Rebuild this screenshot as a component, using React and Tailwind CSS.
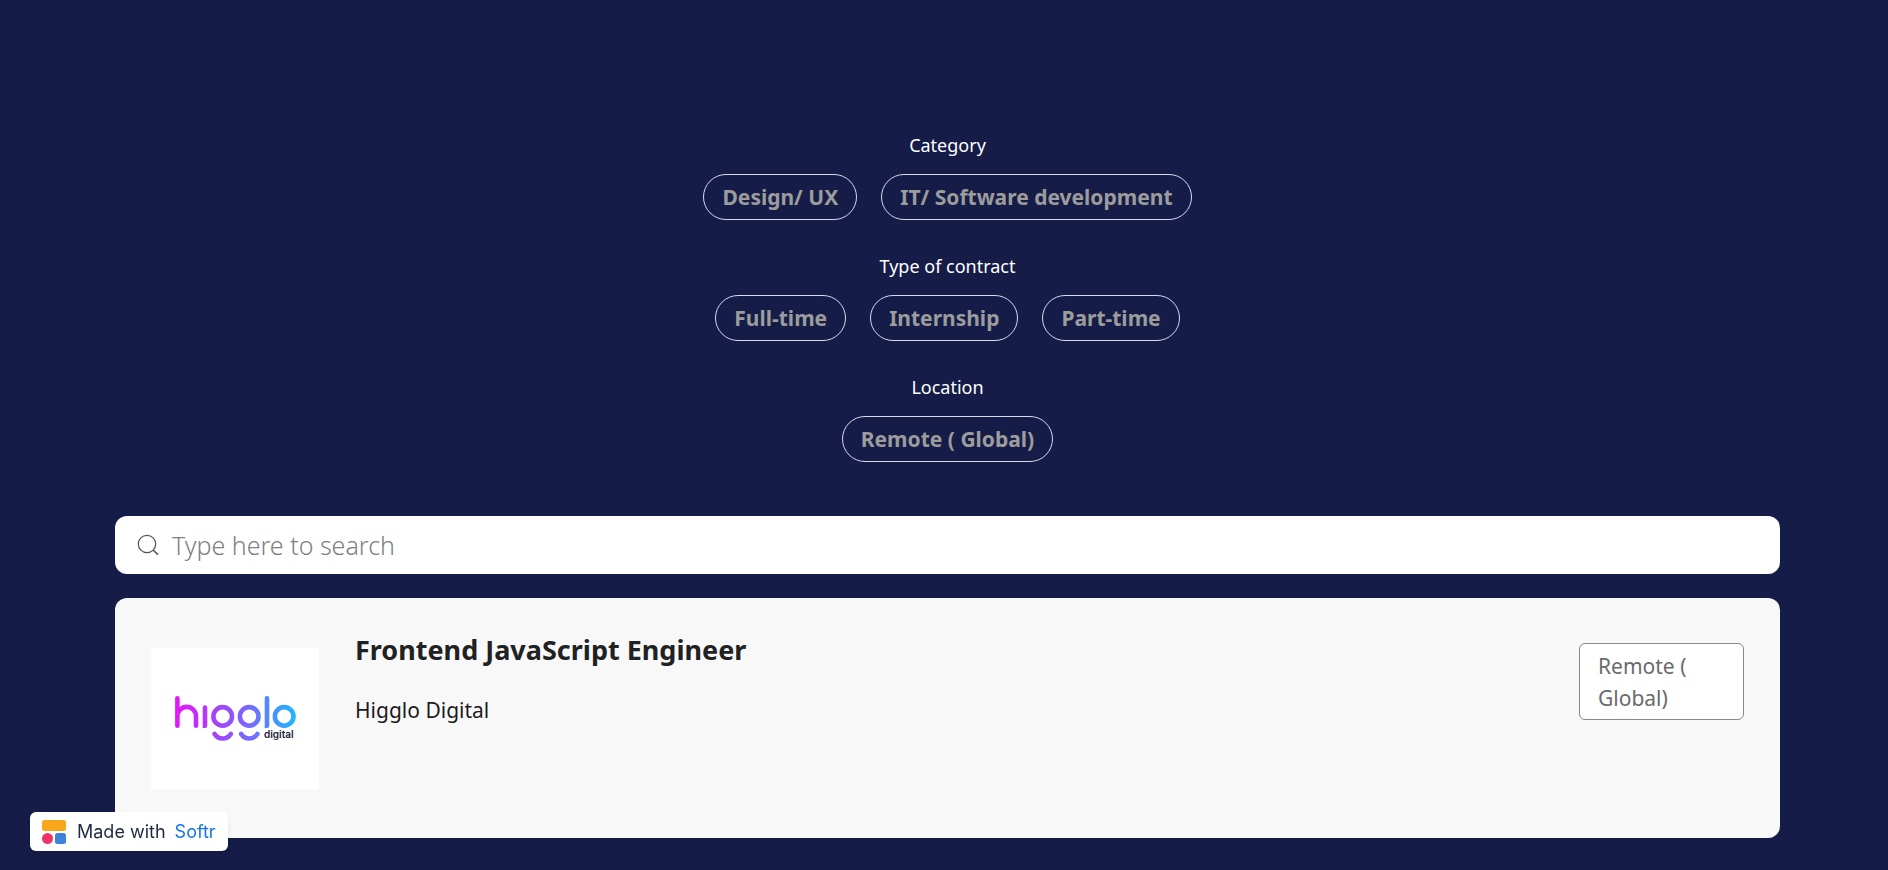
import { useState } from "react";

const filters = [
    { label: "Category", options: ["Design/ UX", "IT/ Software development"] },
    { label: "Type of contract", options: ["Full-time", "Internship", "Part-time"] },
    { label: "Location", options: ["Remote ( Global)"] },
];

const jobs = [
    { title: "Frontend JavaScript Engineer", company: "Higglo Digital", location: "Remote ( Global)" },
];

function HiggloLogo() {
    return (
        <svg viewBox="0 0 168 141" className="w-[168px] h-[141px] bg-white" role="img" aria-label="Higglo Digital">
            <defs>
                <linearGradient id="higglo" gradientUnits="userSpaceOnUse" x1="24" y1="0" x2="145" y2="0">
                    <stop offset="0" stopColor="#e516fb" />
                    <stop offset="0.4" stopColor="#9a4bfb" />
                    <stop offset="0.65" stopColor="#6f70ff" />
                    <stop offset="1" stopColor="#1cb8ff" />
                </linearGradient>
            </defs>
            <g fill="none" stroke="url(#higglo)" strokeWidth="4.6" strokeLinecap="round">
                <path d="M26.4 50.3V77.7M26.4 68.2a9.2 9.2 0 0 1 18.6 0V77.7" />
                <path d="M54 59.5V77.7l.01 0" />
                <circle cx="71.7" cy="68.4" r="9.3" />
                <circle cx="98.2" cy="68.4" r="9.3" />
                <path d="M116 50.3V77.7l.01 0" />
                <circle cx="133.2" cy="68.4" r="9.3" />
                <path d="M63.6 86a9.6 9.6 0 0 0 16.2 0M90.2 86a9.6 9.6 0 0 0 16.2 0" />
            </g>
            <text x="113" y="90" fontSize="10" fontWeight="600" fill="#1b2036" className="font-['Inter',sans-serif]">digital</text>
        </svg>
    );
}

function FilterGroup({ label, options, selected, onToggle }) {
    return (
        <div role="group" aria-label={label} className="flex flex-col items-center">
            <p className="text-lg leading-[26px] text-white">{label}</p>
            <div className="mt-4 flex flex-wrap justify-center gap-6">
                {options.map(option => (
                    <button
                        key={option}
                        type="button"
                        aria-pressed={selected.includes(option)}
                        onClick={() => onToggle(option)}
                        className="rounded-full border border-[#d9dbea] px-[18px] py-1.5 text-[21px] leading-8 font-bold text-[#9c9c9c]"
                    >
                        {option}
                    </button>
                ))}
            </div>
        </div>
    );
}

function JobCard({ job }) {
    return (
        <article className="flex h-60 items-start rounded-xl bg-[#f8f8f8] px-9">
            <div className="mt-[50px] shrink-0">
                <HiggloLogo />
            </div>
            <div className="ml-9 mt-8 grow text-[#1f2222]">
                <h2 className="text-[27px] leading-10 font-bold">{job.title}</h2>
                <p className="mt-6 text-[21px] leading-8 text-[#1c1c1c]">{job.company}</p>
            </div>
            <span className="mt-[45px] w-[165px] shrink-0 rounded-md border border-[#888] bg-white px-[18px] pt-1.5 pb-[5px] text-[21px] leading-8 text-[#6b6b6b]">
                {job.location}
            </span>
        </article>
    );
}

export default function App() {
    const [search, setSearch] = useState(""),
        [selected, setSelected] = useState([]);

    const toggle = (option) => {
        if (selected.includes(option)) {
            setSelected(selected.filter(item => item !== option));
        } else {
            setSelected([...selected, option]);
        }
    }

    const shownJobs = jobs.filter(job => job.title.toLowerCase().includes(search.toLowerCase()));

    return (
        <main className="min-h-screen bg-[#151c48] pt-33 pr-[108px] pb-8 pl-[115px] font-['Noto_Sans',sans-serif]">
            <div className="flex flex-col gap-[33px]">
                {filters.map(filter => (
                    <FilterGroup key={filter.label} {...filter} selected={selected} onToggle={toggle} />
                ))}
            </div>

            <label className="mt-[54px] flex h-[58px] items-center rounded-xl bg-white pl-[22px]">
                <svg viewBox="0 0 22 22" className="size-[22px] shrink-0" fill="none" stroke="#555" strokeWidth="1.2" aria-hidden="true">
                    <circle cx="10" cy="10" r="8.7" />
                    <path d="M16 16l5 4.6" strokeWidth="1.6" />
                </svg>
                <input
                    type="text"
                    aria-label="Search jobs"
                    placeholder="Type here to search"
                    value={search}
                    onChange={e => setSearch(e.target.value)}
                    className="ml-[13px] h-full grow bg-transparent text-[25px] font-light text-[#333] outline-none placeholder:text-[#808080]"
                />
            </label>

            <section className="mt-6 flex flex-col gap-6">
                {shownJobs.map(job => <JobCard key={job.title} job={job} />)}
            </section>

            <a
                href="#softr"
                className="fixed bottom-[19px] left-[30px] flex h-[39px] items-center rounded-md bg-white px-3 font-['Inter',sans-serif] text-lg text-[#1c2a40] shadow-md"
            >
                <svg viewBox="0 0 24 24" className="mr-[11px] size-6" aria-hidden="true">
                    <rect width="24" height="11" rx="2.5" fill="#faa61a" />
                    <circle cx="5.5" cy="18.5" r="5.5" fill="#ef3369" />
                    <rect x="13" y="13" width="11" height="11" rx="2.5" fill="#3b82d9" />
                </svg>
                Made with <span className="ml-[9px] text-[#1676df]">Softr</span>
            </a>
        </main>
    );
}
